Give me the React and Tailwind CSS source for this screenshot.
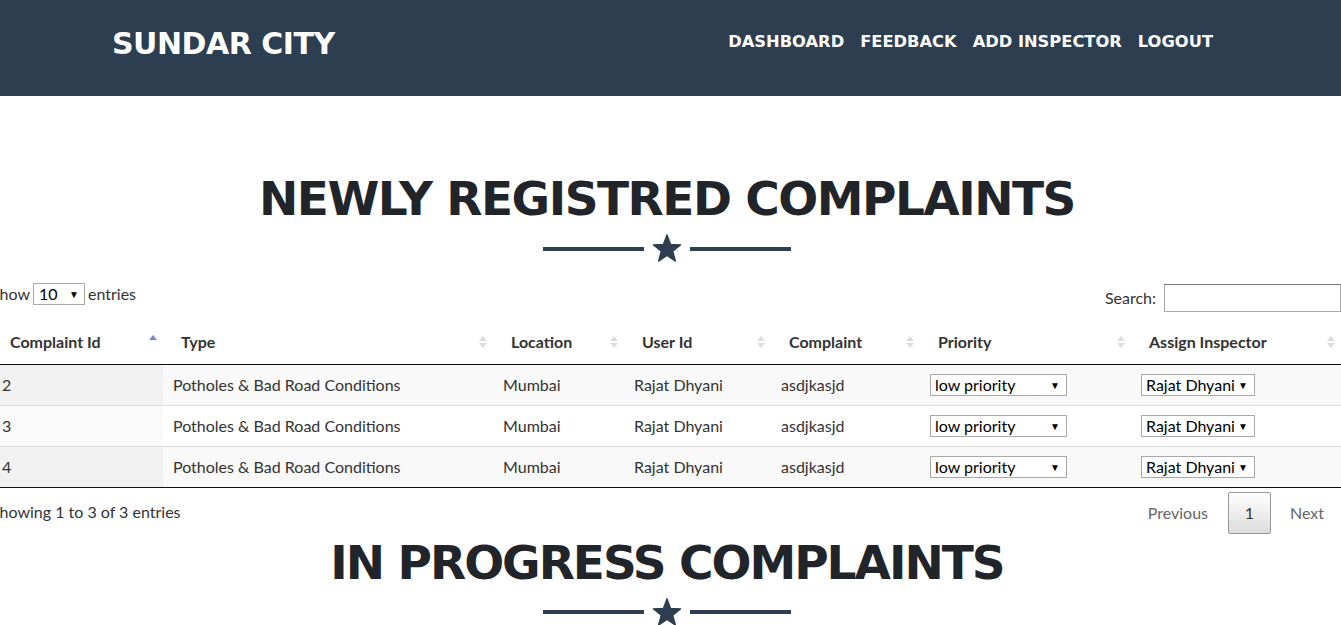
import React from "react";

const columns = [
  { label: "Complaint Id", width: 171, active: true },
  { label: "Type", width: 330 },
  { label: "Location", width: 131 },
  { label: "User Id", width: 147 },
  { label: "Complaint", width: 149 },
  { label: "Priority", width: 211 },
  { label: "Assign Inspector", width: 210 },
];

const rows = [
  { id: 2, type: "Potholes & Bad Road Conditions", location: "Mumbai", user: "Rajat Dhyani", complaint: "asdjkasjd" },
  { id: 3, type: "Potholes & Bad Road Conditions", location: "Mumbai", user: "Rajat Dhyani", complaint: "asdjkasjd" },
  { id: 4, type: "Potholes & Bad Road Conditions", location: "Mumbai", user: "Rajat Dhyani", complaint: "asdjkasjd" },
];

const heading = { fontFamily: '"DejaVu Sans", sans-serif' };
const lato = { fontFamily: "Lato, sans-serif" };

// little up/down arrows datatables puts on each header
const SortIcon = ({ active }) => (
  <svg width="8" height="16" viewBox="0 0 8 16" className="absolute right-[6px] top-1/2 -translate-y-1/2">
    {active ? (
      <polygon points="0,6 8,6 4,1" fill="#7f83d8" />
    ) : (
      <>
        <polygon points="0,7 8,7 4,2" fill="#dcdcdc" />
        <polygon points="0,9 8,9 4,14" fill="#dcdcdc" />
      </>
    )}
  </svg>
);

const FakeSelect = ({ value, width }) => (
  <div
    className="flex items-center justify-between h-[22px] border border-[#a9a9a9] bg-white pl-[4px] pr-[6px] text-[16px] text-black"
    style={{ width }}
  >
    <span className="leading-none">{value}</span>
    <span className="text-[10px] leading-none">▼</span>
  </div>
);

const Divider = () => (
  <div className="flex items-center justify-center gap-[8px] mt-[5px]">
    <div className="w-[101px] h-[4px] bg-[#2c3e50]" />
    <svg width="30" height="29" viewBox="0 0 24 23">
      <polygon
        points="12,0.5 14.9,8.2 23,8.6 16.6,13.7 18.8,21.6 12,17.1 5.2,21.6 7.4,13.7 1,8.6 9.1,8.2"
        fill="#2c3e50"
        stroke="#2c3e50"
        strokeLinejoin="round"
        strokeWidth="1"
      />
    </svg>
    <div className="w-[101px] h-[4px] bg-[#2c3e50]" />
  </div>
);

const SectionTitle = ({ children, tight }) => (
  <div className="text-center pr-[7px]">
    <h2
      className={`text-[47px] font-bold uppercase text-[#212529] leading-[60px] ${
        tight ? "tracking-[-2px]" : "tracking-[-1.5px]"
      }`}
      style={heading}
    >
      {children}
    </h2>
    <Divider />
  </div>
);

const NavBar = () => (
  <nav className="bg-[#2c3e50] h-[96px] pr-[7px]">
    <div className="mx-auto w-[1140px] h-full flex items-center justify-between pl-[15px] pr-[24px]" style={heading}>
      <span className="text-white font-bold text-[30px] tracking-[-0.5px] pb-[10px]">SUNDAR CITY</span>
      <ul className="flex gap-[16px] text-white font-bold text-[16.3px] pb-[12px]">
        <li>DASHBOARD</li>
        <li>FEEDBACK</li>
        <li>ADD INSPECTOR</li>
        <li>LOGOUT</li>
      </ul>
    </div>
  </nav>
);

const ComplaintTable = () => (
  <div className="ml-[-8px] w-[1349px] text-[#333] text-[16px]" style={lato}>
    <div className="flex items-center justify-between h-[40px]">
      <label className="flex items-center gap-[3px] -ml-[1px]">
        Show
        <span className="flex items-center justify-between w-[52px] h-[22px] border border-[#a9a9a9] px-[5px] text-black">
          10 <span className="text-[10px]">▼</span>
        </span>
        entries
      </label>
      <label className="flex items-center gap-[8px] pt-[8px]">
        Search:
        <span className="block w-[177px] h-[28px] border border-[#a9a9a9] border-t-[#767676]" />
      </label>
    </div>

    <table className="table-fixed w-full border-collapse mt-[6px]">
      <colgroup>
        {columns.map((c) => (
          <col key={c.label} style={{ width: c.width }} />
        ))}
      </colgroup>
      <thead>
        <tr className="border-b border-[#111]">
          {columns.map((c) => (
            <th key={c.label} className="relative text-left font-bold pl-[18px] pr-[18px] h-[44px]">
              {c.label}
              <SortIcon active={c.active} />
            </th>
          ))}
        </tr>
      </thead>
      <tbody>
        {rows.map((r, i) => {
          const odd = i % 2 === 0;
          return (
            <tr
              key={r.id}
              className={`h-[41px] ${odd ? "bg-[#f9f9f9]" : "bg-white"} ${
                i === rows.length - 1 ? "border-b border-[#111]" : "border-b border-[#ddd]"
              }`}
            >
              <td className={`px-[10px] ${odd ? "bg-[#f1f1f1]" : "bg-[#fafafa]"}`}>{r.id}</td>
              <td className="px-[10px]">{r.type}</td>
              <td className="px-[10px]">{r.location}</td>
              <td className="px-[10px]">{r.user}</td>
              <td className="px-[10px]">{r.complaint}</td>
              <td className="px-[10px]">
                <FakeSelect value="low priority" width={137} />
              </td>
              <td className="px-[10px]">
                <FakeSelect value="Rajat Dhyani" width={114} />
              </td>
            </tr>
          );
        })}
      </tbody>
    </table>

    <div className="flex items-start justify-between pt-[4px]">
      <span className="pt-[8px] -ml-[1px]">Showing 1 to 3 of 3 entries</span>
      <div className="flex items-center text-[#666] -mr-[2px]">
        <span className="px-[20px]">Previous</span>
        <span className="flex items-center justify-center w-[43px] h-[42px] border border-[#979797] rounded-[2px] bg-gradient-to-b from-white to-[#dcdcdc] text-[#333]">
          1
        </span>
        <span className="px-[19px]">Next</span>
      </div>
    </div>
  </div>
);

export default function App() {
  return (
    <div className="bg-white min-h-screen overflow-hidden">
      <NavBar />
      <section className="pt-[73px]">
        <SectionTitle>Newly Registred Complaints</SectionTitle>
        <div className="mt-[11px]">
          <ComplaintTable />
        </div>
      </section>
      <section className="-mt-[1px]">
        <SectionTitle tight>In Progress Complaints</SectionTitle>
      </section>
    </div>
  );
}
